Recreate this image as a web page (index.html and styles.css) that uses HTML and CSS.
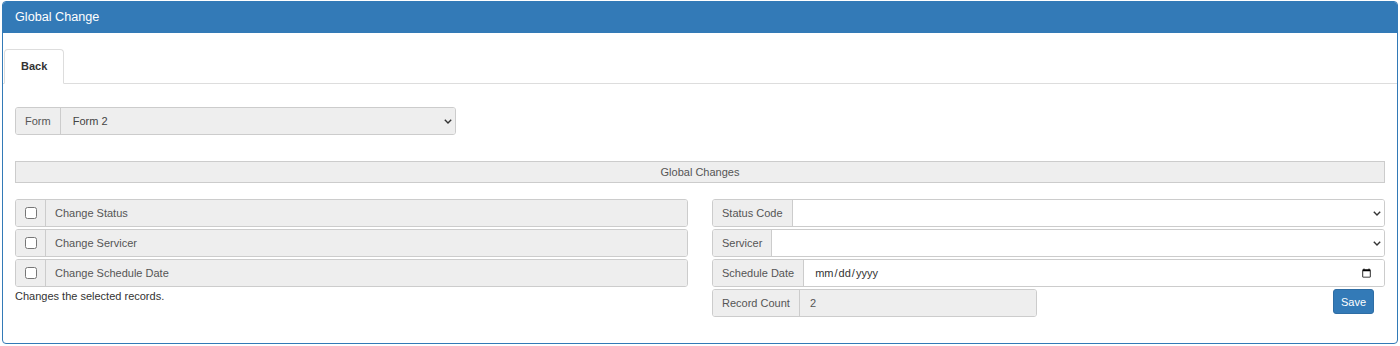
FILE: index.html
```html
<!DOCTYPE html>
<html lang="en">
<head>
<meta charset="utf-8">
<title>Global Change</title>
<link rel="stylesheet" href="styles.css">
</head>
<body>
<div class="page">
  <div class="panel">
    <div class="panel-heading">Global Change</div>
    <div class="panel-body">
      <div class="tabs"><div class="tab">Back</div></div>
      <div class="tab-content">
        <div class="form-row">
          <div class="igroup">
            <span class="addon">Form</span>
            <select class="control select gray" disabled>
              <option>Form 2</option>
            </select>
          </div>
        </div>
        <div class="section-bar">Global Changes</div>
        <div class="cols">
          <div class="col">
            <div class="igroup">
              <span class="addon check"><input type="checkbox"></span>
              <span class="control gray label">Change Status</span>
            </div>
            <div class="igroup">
              <span class="addon check"><input type="checkbox"></span>
              <span class="control gray label">Change Servicer</span>
            </div>
            <div class="igroup">
              <span class="addon check"><input type="checkbox"></span>
              <span class="control gray label">Change Schedule Date</span>
            </div>
            <p class="note">Changes the selected records.</p>
          </div>
          <div class="col">
            <div class="igroup">
              <span class="addon">Status Code</span>
              <select class="control select"><option></option></select>
            </div>
            <div class="igroup">
              <span class="addon">Servicer</span>
              <select class="control select"><option></option></select>
            </div>
            <div class="igroup">
              <span class="addon">Schedule Date</span>
              <input class="control date" type="date">
            </div>
            <div class="split">
              <div class="igroup">
                <span class="addon">Record Count</span>
                <span class="control gray value">2</span>
              </div>
              <div class="save-cell"><button class="btn-save" type="button">Save</button></div>
            </div>
          </div>
        </div>
      </div>
    </div>
  </div>
</div>
</body>
</html>
```
FILE: styles.css
```css
* { box-sizing: border-box; }
html, body { margin: 0; padding: 0; background: #fff; }
body {
  font-family: "Liberation Sans", Arial, sans-serif;
  font-size: 11px;
  line-height: 16px;
  color: #333;
}
.page { padding: 1px 2px 0 2px; }
.panel {
  border: 1px solid #337ab7;
  border-radius: 4px;
  background: #fff;
}
.panel-heading {
  background: #337ab7;
  color: #fff;
  font-size: 12.65px;
  line-height: 18px;
  padding: 6px 12px;
  border-bottom: 1px solid #337ab7;
  border-radius: 3px 3px 0 0;
}
.panel-body { padding-top: 16px; }
.tabs {
  display: flex;
  padding-left: 1px;
  border-bottom: 1px solid #ddd;
}
.tab {
  border: 1px solid #ddd;
  border-bottom-color: transparent;
  border-radius: 4px 4px 0 0;
  margin-bottom: -1px;
  padding: 9px 16px 9px 16px;
  line-height: 15px;
  font-weight: bold;
  background: #fff;
  color: #333;
}
.tab-content { padding: 23px 12px 26px 12px; }
.form-row {
  display: grid;
  grid-template-columns: repeat(3, 1fr);
  column-gap: 24px;
}
.igroup {
  display: flex;
  height: 28px;
  border: 1px solid #ccc;
  border-radius: 3px;
  overflow: hidden;
  background: #fff;
}
.addon {
  display: flex;
  align-items: center;
  padding: 0 9px;
  background: #eee;
  color: #555;
  border-right: 1px solid #ccc;
  white-space: nowrap;
}
.addon.check {
  width: 30px;
  padding: 0;
  justify-content: center;
}
.addon.check input { margin: 0; width: 12px; height: 12px; }
.control {
  flex: 1;
  min-width: 0;
  height: 26px;
  border: 0;
  margin: 0;
  font-family: inherit;
  font-size: 11px;
  color: #555;
  background-color: #fff;
  display: flex;
  align-items: center;
}
.control.gray { background-color: #eee; }
.label { padding: 0 9px; }
.value { padding: 0 10px; }
.select {
  appearance: none;
  -webkit-appearance: none;
  padding: 0 24px 0 12px;
  color: #444;
  opacity: 1;
  background-image: url("data:image/svg+xml,%3Csvg xmlns='http://www.w3.org/2000/svg' width='8' height='5' viewBox='0 0 8 5'%3E%3Cpath d='M0.8 0.8L4 4L7.2 0.8' fill='none' stroke='%23333' stroke-width='1.4'/%3E%3C/svg%3E");
  background-repeat: no-repeat;
  background-position: right 3px center;
}
.date {
  display: block;
  padding: 0 10px 0 10px;
  color: #333;
  outline: none;
}
.date::-webkit-calendar-picker-indicator {
  margin-left: auto;
}
.date::-webkit-datetime-edit { flex: 1; }
.section-bar {
  margin-top: 26px;
  height: 22px;
  line-height: 20px;
  border: 1px solid #ccc;
  background: #eee;
  color: #555;
  text-align: center;
}
.cols {
  margin-top: 16px;
  display: grid;
  grid-template-columns: 1fr 1fr;
  column-gap: 24px;
  align-items: start;
}
.col {
  display: flex;
  flex-direction: column;
  gap: 2px;
}
.note { margin: -1px 0 0 0; line-height: 16px; color: #333; }
.split {
  display: grid;
  grid-template-columns: 1fr 1fr;
  column-gap: 24px;
}
.save-cell {
  display: flex;
  justify-content: flex-end;
  align-items: flex-start;
  padding-right: 11px;
}
.btn-save {
  height: 25px;
  padding: 0 7px;
  font-family: inherit;
  font-size: 11px;
  color: #fff;
  background: #337ab7;
  border: 1px solid #2e6da4;
  border-radius: 3px;
}
```
